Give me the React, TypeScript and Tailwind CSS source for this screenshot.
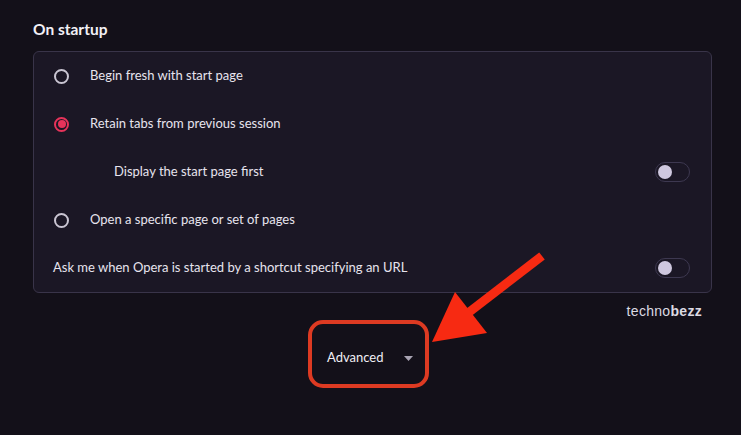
import { useState } from 'react'

type Row =
  | { kind: 'radio'; key: string; label: string }
  | { kind: 'sub'; key: string; label: string }
  | { kind: 'switch'; key: string; label: string }

const ROWS: Row[] = [
  { kind: 'radio', key: 'fresh', label: 'Begin fresh with start page' },
  { kind: 'radio', key: 'retain', label: 'Retain tabs from previous session' },
  { kind: 'sub', key: 'startFirst', label: 'Display the start page first' },
  { kind: 'radio', key: 'specific', label: 'Open a specific page or set of pages' },
  { kind: 'switch', key: 'askShortcut', label: 'Ask me when Opera is started by a shortcut specifying an URL' },
]

function Radio({ checked }: { checked: boolean }) {
  return checked ? (
    <span className="w-[15px] h-[15px] rounded-full border-2 border-[#e6335a] flex items-center justify-center shrink-0">
      <span className="w-[8px] h-[8px] rounded-full bg-[#e6335a]" />
    </span>
  ) : (
    <span className="w-[15px] h-[15px] rounded-full border-2 border-[#c9c5d2] shrink-0" />
  )
}

function Toggle({ on, onClick }: { on: boolean; onClick: () => void }) {
  return (
    <button
      onClick={onClick}
      className={`w-[35px] h-[20px] rounded-full border border-[#3d3850] flex items-center px-[2px] ${on ? 'justify-end' : 'justify-start'}`}
    >
      <span className="w-[14px] h-[14px] rounded-full bg-[#cfc8df]" />
    </button>
  )
}

export default function App() {
  const [startup, setStartup] = useState('retain')
  const [toggles, setToggles] = useState<Record<string, boolean>>({ startFirst: false, askShortcut: false })

  const flip = (k: string) => setToggles(t => ({ ...t, [k]: !t[k] }))

  return (
    <div className="relative w-[741px] h-[435px] overflow-hidden bg-[#131019] font-['Lato',sans-serif] text-[#e7e4ee]">
      <div className="pl-[33px] pr-[29px] pt-[19px]">
        <h2 className="h-[20px] leading-[20px] text-[15.5px] font-bold text-[#f2f0f6]">On startup</h2>

        {/* Settings card */}
        <div className="mt-[12px] bg-[#1b1725] border border-[#393449] rounded-md">
          {ROWS.map(row => {
            if (row.kind === 'radio') {
              return (
                <div
                  key={row.key}
                  onClick={() => setStartup(row.key)}
                  className="h-[48px] flex items-center pl-[20px] gap-[21px] text-[13px] cursor-pointer"
                >
                  <Radio checked={startup === row.key} />
                  <span>{row.label}</span>
                </div>
              )
            }
            return (
              <div
                key={row.key}
                className={`h-[48px] flex items-center justify-between pr-[21px] text-[13px] ${row.kind === 'sub' ? 'pl-[80px]' : 'pl-[19px]'}`}
              >
                <span>{row.label}</span>
                <Toggle on={toggles[row.key]} onClick={() => flip(row.key)} />
              </div>
            )
          })}
        </div>

        {/* Advanced, highlighted */}
        <div className="mt-[27px] ml-[275px] w-[121px] h-[68px] border-[4px] border-[#dd3a22] rounded-[15px] flex items-center pt-[8px] pl-[15px]">
          <button className="flex items-center gap-[21px] text-[13px] text-[#f0eef4]">
            Advanced
            <svg width="9" height="5" viewBox="0 0 9 5"><path d="M0 0h9L4.5 5z" fill="#a9a4b3" /></svg>
          </button>
        </div>
      </div>

      {/* watermark */}
      <div className="absolute right-[39px] top-[301px] text-[14px] text-[#dcdae2] font-['Liberation_Sans',sans-serif] tracking-[0.3px]">
        techno<span className="font-bold">bezz</span>
      </div>

      {/* red annotation arrow */}
      <svg className="absolute left-0 top-0" width="741" height="435" viewBox="0 0 741 435">
        <line x1="542" y1="256" x2="468" y2="313" stroke="#f72a12" strokeWidth="9" />
        <polygon points="432,342 455,292 487,333" fill="#f72a12" />
      </svg>
    </div>
  )
}
